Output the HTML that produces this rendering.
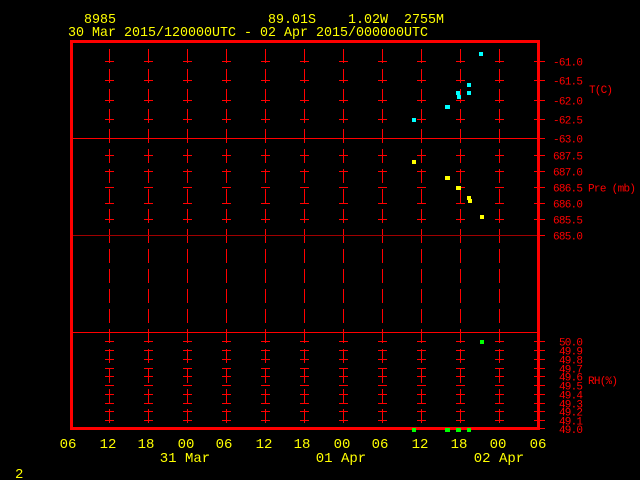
<!DOCTYPE html>
<html><head><style>
html,body{margin:0;padding:0;background:#000;}
svg{display:block}
text{font-family:"Liberation Mono",monospace;}
.y{fill:#ffff00;font-size:14px}
.r{fill:#ff0000;font-size:11px}
</style></head><body>
<svg width="640" height="480" viewBox="0 0 640 480" xmlns="http://www.w3.org/2000/svg" shape-rendering="crispEdges">
<rect width="640" height="480" fill="#000"/>
<text class="y" x="84" y="23" textLength="32" lengthAdjust="spacingAndGlyphs">8985</text>
<text class="y" x="268" y="23" textLength="48" lengthAdjust="spacingAndGlyphs">89.01S</text>
<text class="y" x="348" y="23" textLength="40" lengthAdjust="spacingAndGlyphs">1.02W</text>
<text class="y" x="404" y="23" textLength="40" lengthAdjust="spacingAndGlyphs">2755M</text>
<text class="y" x="68" y="36" textLength="360" lengthAdjust="spacingAndGlyphs">30 Mar 2015/120000UTC - 02 Apr 2015/000000UTC</text>
<g stroke="#ff0000" fill="none">
<g stroke-width="1" stroke-dasharray="14 6">
<line x1="109.5" y1="49" x2="109.5" y2="428"/>
<line x1="148.5" y1="49" x2="148.5" y2="428"/>
<line x1="187.5" y1="49" x2="187.5" y2="428"/>
<line x1="226.5" y1="49" x2="226.5" y2="428"/>
<line x1="265.5" y1="49" x2="265.5" y2="428"/>
<line x1="304.5" y1="49" x2="304.5" y2="428"/>
<line x1="343.5" y1="49" x2="343.5" y2="428"/>
<line x1="382.5" y1="49" x2="382.5" y2="428"/>
<line x1="421.5" y1="49" x2="421.5" y2="428"/>
<line x1="460.5" y1="49" x2="460.5" y2="428"/>
<line x1="499.5" y1="49" x2="499.5" y2="428"/>
</g>
<g stroke-width="1" stroke-dasharray="9 30">
<line x1="105" y1="61.5" x2="504" y2="61.5"/>
<line x1="105" y1="80.5" x2="504" y2="80.5"/>
<line x1="105" y1="100.5" x2="504" y2="100.5"/>
<line x1="105" y1="119.5" x2="504" y2="119.5"/>
<line x1="105" y1="155.5" x2="504" y2="155.5"/>
<line x1="105" y1="171.5" x2="504" y2="171.5"/>
<line x1="105" y1="187.5" x2="504" y2="187.5"/>
<line x1="105" y1="203.5" x2="504" y2="203.5"/>
<line x1="105" y1="219.5" x2="504" y2="219.5"/>
<line x1="105" y1="341.5" x2="504" y2="341.5"/>
<line x1="105" y1="350.5" x2="504" y2="350.5"/>
<line x1="105" y1="359.5" x2="504" y2="359.5"/>
<line x1="105" y1="368.5" x2="504" y2="368.5"/>
<line x1="105" y1="376.5" x2="504" y2="376.5"/>
<line x1="105" y1="385.5" x2="504" y2="385.5"/>
<line x1="105" y1="394.5" x2="504" y2="394.5"/>
<line x1="105" y1="403.5" x2="504" y2="403.5"/>
<line x1="105" y1="411.5" x2="504" y2="411.5"/>
<line x1="105" y1="420.5" x2="504" y2="420.5"/>
</g>
<g stroke-width="1">
<line x1="534" y1="61.5" x2="545" y2="61.5"/>
<line x1="534" y1="80.5" x2="545" y2="80.5"/>
<line x1="534" y1="100.5" x2="545" y2="100.5"/>
<line x1="534" y1="119.5" x2="545" y2="119.5"/>
<line x1="534" y1="138.5" x2="545" y2="138.5"/>
<line x1="534" y1="155.5" x2="545" y2="155.5"/>
<line x1="534" y1="171.5" x2="545" y2="171.5"/>
<line x1="534" y1="187.5" x2="545" y2="187.5"/>
<line x1="534" y1="203.5" x2="545" y2="203.5"/>
<line x1="534" y1="219.5" x2="545" y2="219.5"/>
<line x1="534" y1="235.5" x2="545" y2="235.5"/>
<line x1="534" y1="341.5" x2="545" y2="341.5"/>
<line x1="534" y1="350.5" x2="545" y2="350.5"/>
<line x1="534" y1="359.5" x2="545" y2="359.5"/>
<line x1="534" y1="368.5" x2="545" y2="368.5"/>
<line x1="534" y1="376.5" x2="545" y2="376.5"/>
<line x1="534" y1="385.5" x2="545" y2="385.5"/>
<line x1="534" y1="394.5" x2="545" y2="394.5"/>
<line x1="534" y1="403.5" x2="545" y2="403.5"/>
<line x1="534" y1="411.5" x2="545" y2="411.5"/>
<line x1="534" y1="420.5" x2="545" y2="420.5"/>
<line x1="534" y1="428.5" x2="545" y2="428.5"/>
<line x1="71" y1="138.5" x2="538" y2="138.5"/>
<line x1="71" y1="235.5" x2="538" y2="235.5" stroke="#a00000"/>
<line x1="71" y1="332.5" x2="538" y2="332.5"/>
</g>
<rect x="71.5" y="41.5" width="467" height="387" stroke-width="3"/>
</g>
<g fill="#00ffff">
<rect x="479" y="52" width="4" height="4"/>
<rect x="467" y="83" width="4" height="4"/>
<rect x="467" y="91" width="4" height="4"/>
<rect x="456" y="91" width="4" height="4"/>
<rect x="457" y="95" width="4" height="4"/>
<rect x="445" y="105" width="5" height="4"/>
<rect x="412" y="118" width="4" height="4"/>
</g>
<g fill="#ffff00">
<rect x="412" y="160" width="4" height="4"/>
<rect x="445" y="176" width="5" height="4"/>
<rect x="456" y="186" width="5" height="4"/>
<rect x="467" y="196" width="4" height="4"/>
<rect x="468" y="199" width="4" height="4"/>
<rect x="480" y="215" width="4" height="4"/>
</g>
<g fill="#00ff00">
<rect x="480" y="340" width="4" height="4"/>
<rect x="412" y="428" width="4" height="4"/>
<rect x="445" y="428" width="5" height="4"/>
<rect x="456" y="428" width="5" height="4"/>
<rect x="467" y="428" width="4" height="4"/>
</g>
<g class="r" lengthAdjust="spacingAndGlyphs">
<text x="553" y="65.5" textLength="30">-61.0</text>
<text x="553" y="84.5" textLength="30">-61.5</text>
<text x="553" y="104.5" textLength="30">-62.0</text>
<text x="553" y="123.5" textLength="30">-62.5</text>
<text x="553" y="142.5" textLength="30">-63.0</text>
<text x="589" y="93" textLength="24">T(C)</text>
<text x="553" y="159.5" textLength="30">687.5</text>
<text x="553" y="175.5" textLength="30">687.0</text>
<text x="553" y="191.5" textLength="30">686.5</text>
<text x="553" y="207.5" textLength="30">686.0</text>
<text x="553" y="223.5" textLength="30">685.5</text>
<text x="553" y="239.5" textLength="30">685.0</text>
<text x="588" y="191.5" textLength="48">Pre (mb)</text>
<text x="559" y="345.5" textLength="24">50.0</text>
<text x="559" y="354.5" textLength="24">49.9</text>
<text x="559" y="363.5" textLength="24">49.8</text>
<text x="559" y="372.5" textLength="24">49.7</text>
<text x="559" y="380.5" textLength="24">49.6</text>
<text x="559" y="389.5" textLength="24">49.5</text>
<text x="559" y="398.5" textLength="24">49.4</text>
<text x="559" y="407.5" textLength="24">49.3</text>
<text x="559" y="415.5" textLength="24">49.2</text>
<text x="559" y="424.5" textLength="24">49.1</text>
<text x="559" y="433" textLength="24">49.0</text>
<text x="588" y="384" textLength="30">RH(%)</text>
</g>
<g class="y" text-anchor="middle">
<text x="68" y="448">06</text>
<text x="108" y="448">12</text>
<text x="146" y="448">18</text>
<text x="186" y="448">00</text>
<text x="224" y="448">06</text>
<text x="264" y="448">12</text>
<text x="302" y="448">18</text>
<text x="342" y="448">00</text>
<text x="380" y="448">06</text>
<text x="420" y="448">12</text>
<text x="459" y="448">18</text>
<text x="498" y="448">00</text>
<text x="538" y="448">06</text>
<text x="185" y="462">31 Mar</text>
<text x="341" y="462">01 Apr</text>
<text x="499" y="462">02 Apr</text>
</g>
<text class="y" x="15" y="478">2</text>
</svg>
</body></html>
